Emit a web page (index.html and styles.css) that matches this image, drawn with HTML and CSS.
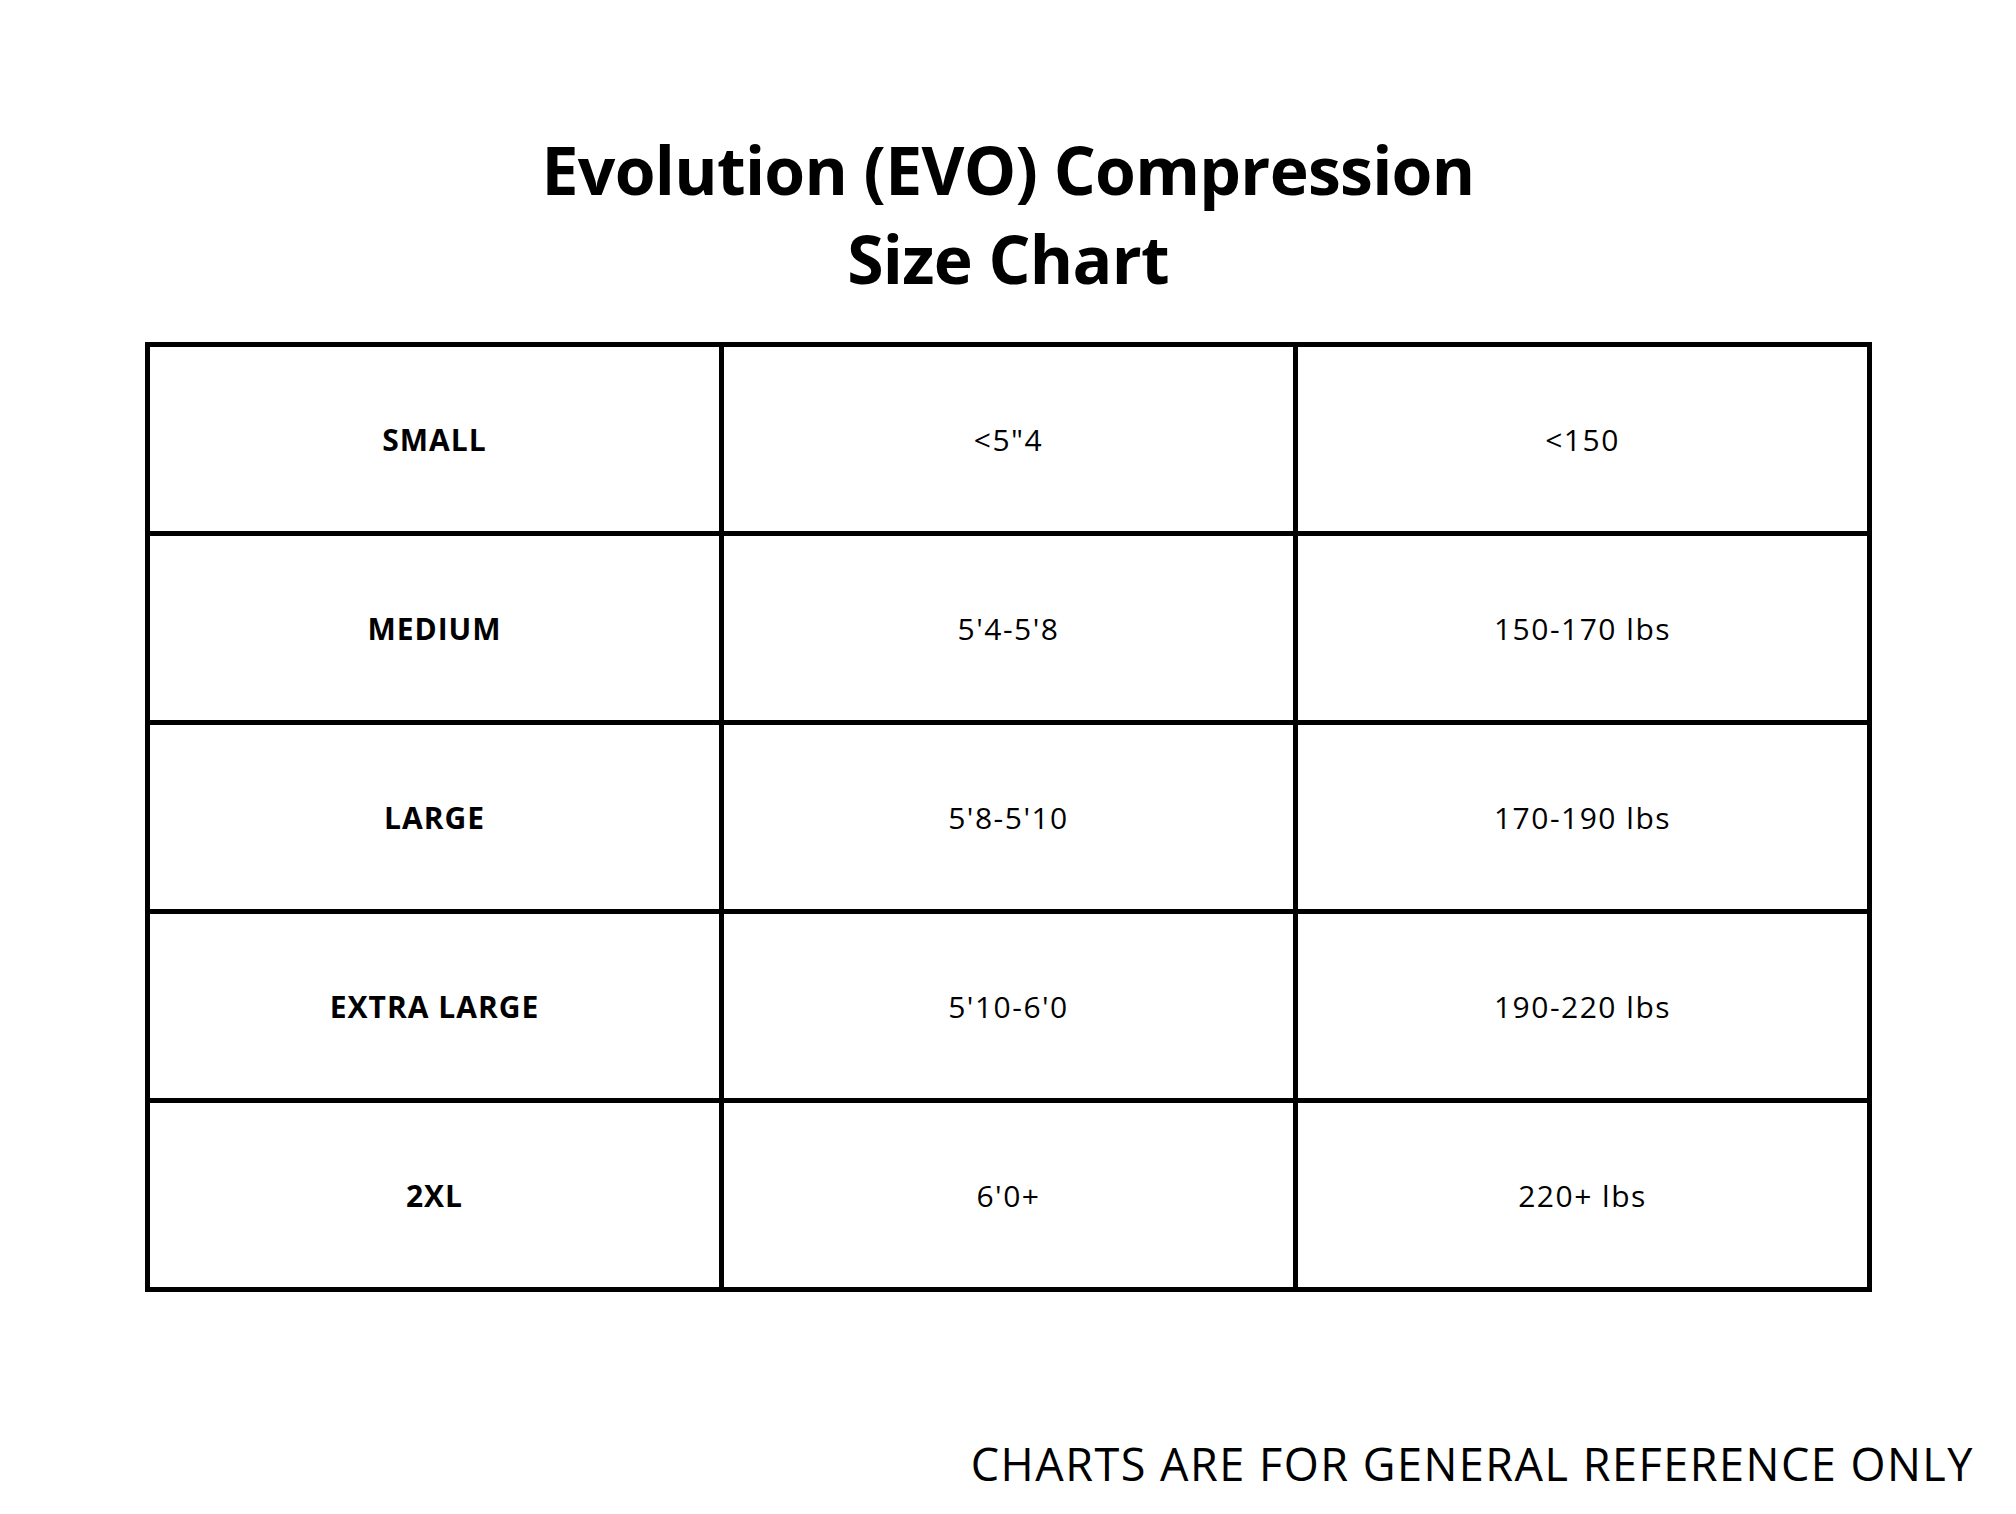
FILE: index.html
```html
<!DOCTYPE html>
<html lang="en">
<head>
<meta charset="utf-8">
<title>Evolution (EVO) Compression Size Chart</title>
<link rel="stylesheet" href="styles.css">
</head>
<body>
<main class="page">
  <h1 class="title">Evolution (EVO) Compression<br>Size Chart</h1>
  <div class="chart">
    <div class="cell size">SMALL</div>
    <div class="cell">&lt;5"4</div>
    <div class="cell">&lt;150</div>

    <div class="cell size">MEDIUM</div>
    <div class="cell">5'4-5'8</div>
    <div class="cell">150-170 lbs</div>

    <div class="cell size">LARGE</div>
    <div class="cell">5'8-5'10</div>
    <div class="cell">170-190 lbs</div>

    <div class="cell size">EXTRA LARGE</div>
    <div class="cell">5'10-6'0</div>
    <div class="cell">190-220 lbs</div>

    <div class="cell size">2XL</div>
    <div class="cell">6'0+</div>
    <div class="cell">220+ lbs</div>
  </div>
  <p class="note">CHARTS ARE FOR GENERAL REFERENCE ONLY</p>
</main>
</body>
</html>
```
FILE: styles.css
```css
html, body {
  margin: 0;
  padding: 0;
  background: #ffffff;
}

.page {
  width: 2016px;
  height: 1514px;
  overflow: hidden;
  display: flex;
  flex-direction: column;
  color: #000;
  font-family: "Open Sans", "Liberation Sans", sans-serif;
}

.title {
  margin: 125px 0 0 0;
  font-size: 66px;
  line-height: 89px;
  font-weight: 700;
  text-align: center;
  letter-spacing: -0.7px;
}

.chart {
  margin: 39px 0 0 145px;
  width: 1717px;
  display: grid;
  grid-template-columns: repeat(3, 569px);
  grid-template-rows: repeat(5, 184px);
  gap: 5px;
  padding: 5px;
  background: #000;
}

.cell {
  background: #fff;
  display: flex;
  align-items: center;
  justify-content: center;
  font-size: 30px;
  font-weight: 500;
  letter-spacing: 1.5px;
}

.cell.size {
  font-weight: 700;
  letter-spacing: 1px;
}

.note {
  margin: 142px 42px 0 0;
  align-self: flex-end;
  font-size: 45px;
  line-height: 60px;
  font-weight: 400;
  letter-spacing: 1.5px;
}
```
